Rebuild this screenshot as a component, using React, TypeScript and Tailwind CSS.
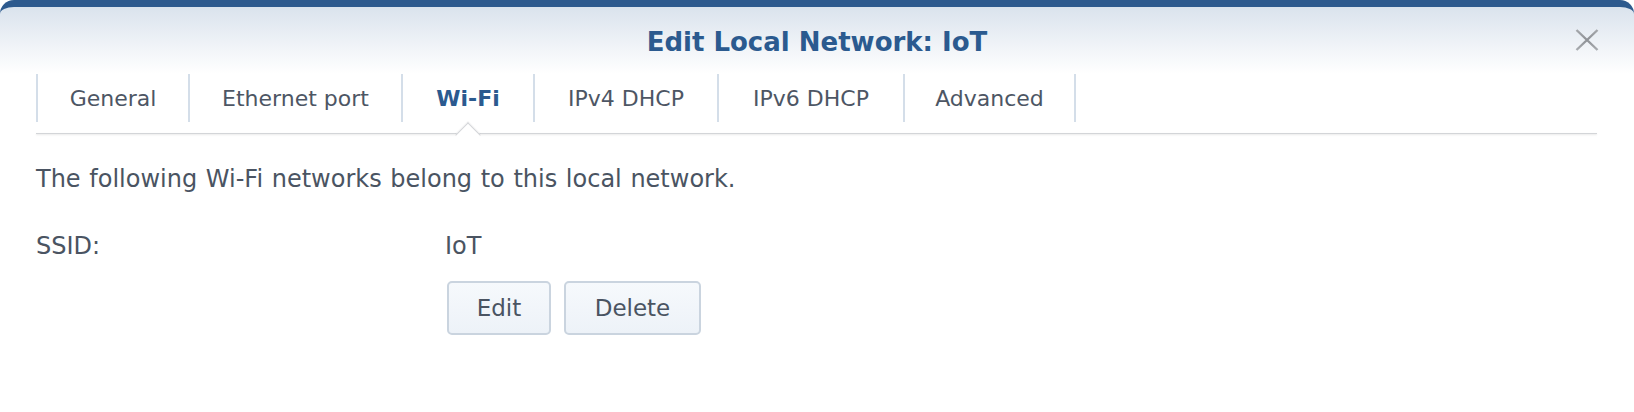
import React from "react";

const tabs = [
  { label: "General", w: "w-[152px]" },
  { label: "Ethernet port", w: "w-[213px]" },
  { label: "Wi-Fi", w: "w-[132px]", active: true },
  { label: "IPv4 DHCP", w: "w-[184px]" },
  { label: "IPv6 DHCP", w: "w-[186px]" },
  { label: "Advanced", w: "w-[173px]", last: true },
];

export default function App() {
  return (
    <div className="w-[1634px] h-[412px] bg-white overflow-hidden font-['DejaVu_Sans',Verdana,sans-serif] text-[#4a5462]">
      {/* Header */}
      <div className="h-[74px] rounded-t-[14px] border-t-[7px] border-[#2d5a8e] bg-linear-to-b from-[#dae3ed] via-[#edf1f6] to-white grid grid-cols-[1fr_auto_1fr] items-start pt-[20px]">
        <div />
        <h1 className="text-[26px] leading-[30px] font-bold text-[#2b5a8f]">Edit Local Network: IoT</h1>
        <div className="flex justify-end pr-[35px] pt-[2px]">
          <svg width="24" height="22" viewBox="0 0 24 22" fill="none">
            <defs>
              <linearGradient id="xg" x1="0" y1="0" x2="0" y2="1">
                <stop offset="0" stopColor="#a4a7ab" />
                <stop offset="0.5" stopColor="#8e9196" />
                <stop offset="1" stopColor="#a9acb0" />
              </linearGradient>
            </defs>
            <path d="M1.5 1 L22.5 21 M22.5 1 L1.5 21" stroke="url(#xg)" strokeWidth="2.4" strokeLinecap="butt" />
          </svg>
        </div>
      </div>

      {/* Tabs */}
      <div className="mx-[36px] relative">
        <div className="flex h-[48px]">
          {tabs.map((t) => (
            <div
              key={t.label}
              className={`${t.w} relative flex items-center justify-center border-l-2 border-[#d4dee9] ${t.last ? "border-r-2" : ""}`}
            >
              <span
                className={`text-[22px] whitespace-nowrap ${t.active ? "font-bold text-[#2b5a8f]" : "text-[#4d5664]"}`}
              >
                {t.label}
              </span>
              {t.active && (
                <div className="absolute z-10 left-1/2 -ml-[9px] top-[calc(100%+4px)] w-[18px] h-[18px] rotate-45 bg-white border-l border-t border-[#d3d5d8] shadow-[-1px_-1px_1px_rgba(0,0,0,0.04)]" />
              )}
            </div>
          ))}
        </div>
        <div className="h-[11px]" />
        <div className="h-[1px] bg-[#d3d5d8] shadow-[0_1px_2px_rgba(0,0,0,0.12)] mr-[1px]" />
      </div>

      {/* Body */}
      <div className="px-[36px]">
        <p className="mt-[31px] text-[24px] leading-[28px] [word-spacing:1px]">
          The following Wi-Fi networks belong to this local network.
        </p>
        <div className="mt-[39px] grid grid-cols-[409px_1fr] text-[24px] leading-[28px]">
          <div>SSID:</div>
          <div>
            <div>IoT</div>
            <div className="mt-[21px] ml-[2px] flex gap-[13px]">
              <button className="w-[104px] h-[54px] rounded-[5px] border-2 border-[#cad4df] bg-linear-to-b from-[#f6f9fc] to-[#edf2f8] text-[23px] text-[#4a5462]">
                Edit
              </button>
              <button className="w-[137px] h-[54px] rounded-[5px] border-2 border-[#cad4df] bg-linear-to-b from-[#f6f9fc] to-[#edf2f8] text-[23px] text-[#4a5462]">
                Delete
              </button>
            </div>
          </div>
        </div>
      </div>
    </div>
  );
}
